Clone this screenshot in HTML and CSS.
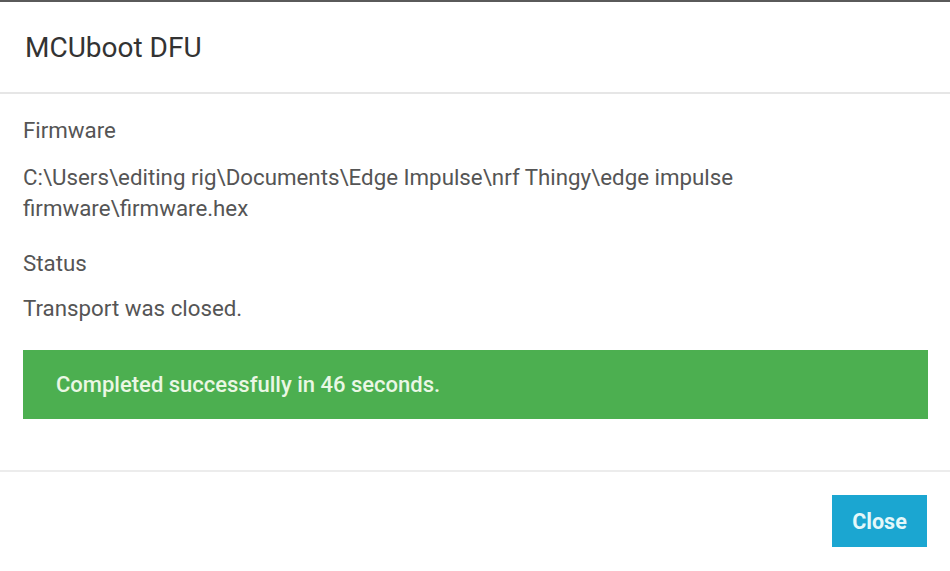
FILE: index.html
```html
<!DOCTYPE html>
<html>
<head>
<meta charset="utf-8">
<link rel="stylesheet" href="styles.css">
</head>
<body>
<div class="modal">
  <div class="modal-header">
    <h1 class="title">MCUboot DFU</h1>
  </div>
  <div class="modal-body">
    <div class="label">Firmware</div>
    <div class="value path">C:\Users\editing rig\Documents\Edge Impulse\nrf Thingy\edge impulse firmware\firmware.hex</div>
    <div class="label status-label">Status</div>
    <div class="value status-value">Transport was closed.</div>
    <div class="alert">Completed successfully in 46 seconds.</div>
  </div>
  <div class="modal-footer">
    <button class="btn-close">Close</button>
  </div>
</div>
</body>
</html>
```
FILE: styles.css
```css
html, body {
  margin: 0;
  padding: 0;
  background: #fff;
}
body {
  font-family: Roboto, "Liberation Sans", sans-serif;
  width: 950px;
  height: 571px;
  overflow: hidden;
}
.modal {
  border-top: 2px solid #5a5a5a;
  display: flex;
  flex-direction: column;
}
.modal-header {
  height: 92px;
  border-bottom: 2px solid #e6e6e6;
  display: flex;
  align-items: center;
  padding-left: 25px;
  box-sizing: border-box;
}
.title {
  margin: 0;
  font-size: 28px;
  font-weight: 400;
  color: #333;
  padding-top: 1px;
}
.modal-body {
  padding: 21px 22px 51px 23px;
  border-bottom: 2px solid #ececec;
}
.label {
  font-size: 22.3px;
  color: #555;
  line-height: 31px;
}
.value {
  font-size: 22.3px;
  color: #555;
  line-height: 31px;
  margin-top: 16px;
}
.path {
  width: 750px;
}
.status-label {
  margin-top: 24px;
}
.status-value {
  margin-top: 14px;
}
.alert {
  margin-top: 26px;
  background: #4caf50;
  color: #eaf7e4;
  font-size: 22px;
  font-weight: 500;
  height: 69px;
  display: flex;
  align-items: center;
  padding-left: 33px;
}
.modal-footer {
  display: flex;
  justify-content: flex-end;
  padding: 23px 23px 0 0;
}
.btn-close {
  width: 95px;
  height: 52px;
  border: none;
  background: #1ba6d1;
  color: #e4f8fa;
  font-family: Roboto, "Liberation Sans", sans-serif;
  font-size: 21.5px;
  font-weight: 700;
  padding: 0;
}
```
